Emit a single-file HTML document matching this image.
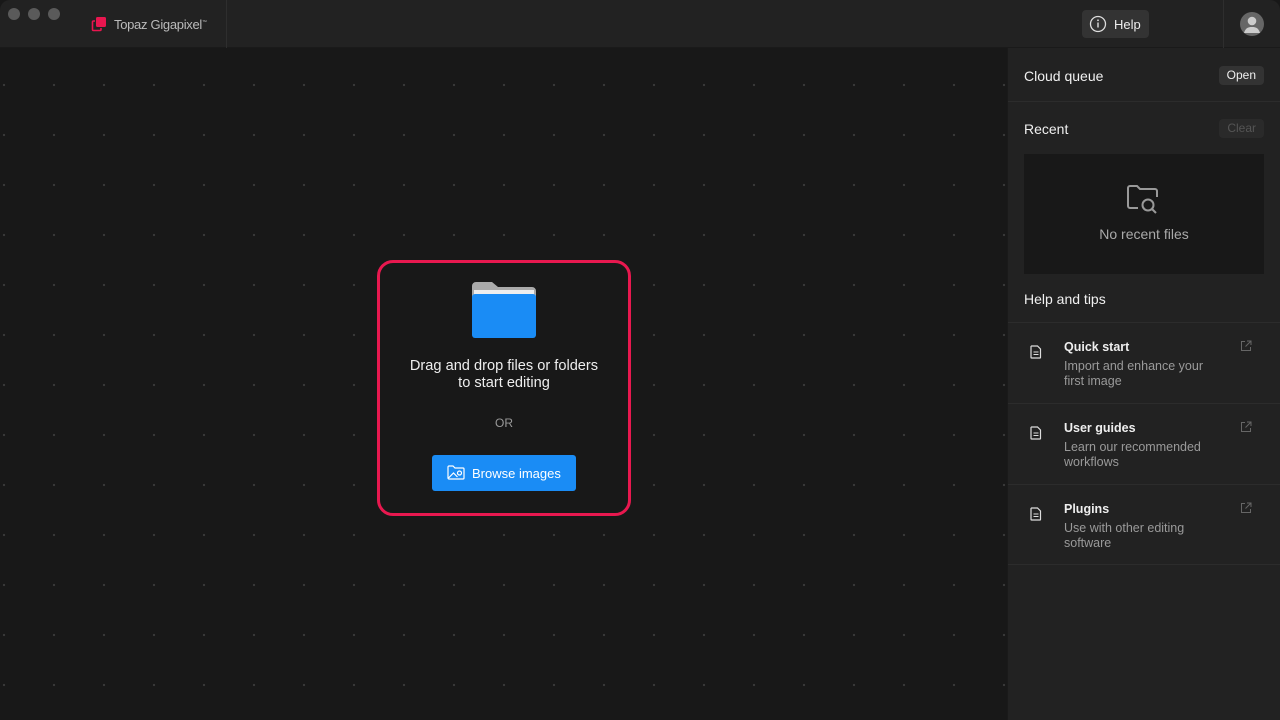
<!DOCTYPE html>
<html><head><style>
*{margin:0;padding:0;box-sizing:border-box}
body{width:1280px;height:720px;background:#181818;font-family:"Liberation Sans",sans-serif;overflow:hidden;position:relative;color:#eee}
.top{position:absolute;left:0;top:0;width:1280px;height:48px;background:#222;border-bottom:1px solid #1a1a1a;border-radius:10px 10px 0 0}
.tl{position:absolute;top:8px;width:12px;height:12px;border-radius:50%;background:#5a5a5a}
.main{position:absolute;left:0;top:48px;width:1008px;height:672px;background-color:#181818;background-image:radial-gradient(circle,#3a3a3a 1px,transparent 1.3px);background-size:50px 50px;background-position:-21px -38px}
.side{position:absolute;left:1008px;top:48px;width:272px;height:672px;background:#222;box-shadow:-1px 0 0 #1a1a1a}
.h{position:absolute;left:16px;font-size:14px;color:#f0f0f0}
.btn{position:absolute;right:16px;height:19px;border-radius:4px;font-size:12px;padding:2px 8px;background:#333}
.item{position:absolute;left:0;width:272px;height:81px;border-top:1px solid #2c2c2c}
.item b{position:absolute;left:56px;top:17px;font-size:12.5px;font-weight:bold;color:#eee}
.item p{position:absolute;left:56px;top:36px;font-size:12.5px;color:#9a9a9a;line-height:15px;width:160px}
.item svg{position:absolute}
</style></head><body>
<div class="top">
<div class="tl" style="left:8px"></div><div class="tl" style="left:28px"></div><div class="tl" style="left:48px"></div>
<svg style="position:absolute;left:91px;top:16px" width="16" height="16" viewBox="0 0 16 16"><rect x="5" y="1" width="10" height="10" rx="1.5" fill="#e8164f"/><path d="M4 5H2.5A1 1 0 0 0 1.5 6v7.5a1 1 0 0 0 1 1H9a1 1 0 0 0 1-1V12" fill="none" stroke="#e8164f" stroke-width="1.6"/></svg>
<div style="position:absolute;left:114px;top:17px;font-size:13px;color:#bbb;letter-spacing:-0.3px">Topaz Gigapixel<sup style="font-size:5px">™</sup></div>
<div style="position:absolute;left:226px;top:0;width:1px;height:48px;background:#2e2e2e"></div>
<div style="position:absolute;left:1082px;top:10px;width:67px;height:28px;background:#333;border-radius:4px"></div>
<svg style="position:absolute;left:1089px;top:15px" width="18" height="18" viewBox="0 0 18 18"><circle cx="9" cy="9" r="7.5" fill="none" stroke="#ddd" stroke-width="1.3"/><rect x="8.3" y="7.5" width="1.4" height="5" fill="#ddd"/><circle cx="9" cy="5.3" r="0.9" fill="#ddd"/></svg>
<div style="position:absolute;left:1114px;top:17px;font-size:13px;color:#eee">Help</div>
<div style="position:absolute;left:1223px;top:0;width:1px;height:48px;background:#2e2e2e"></div>
<svg style="position:absolute;left:1240px;top:12px" width="24" height="24" viewBox="0 0 24 24"><circle cx="12" cy="12" r="12" fill="#666"/><circle cx="12" cy="9" r="4.3" fill="#ccc"/><path d="M4 21c1.5-5 4-6 8-6s6.5 1 8 6z" fill="#ccc"/></svg>
</div>
<div class="main">
<div style="position:absolute;left:377px;top:212px;width:254px;height:256px;border:3px solid #e8184f;border-radius:16px;background:#181818"></div>
<svg style="position:absolute;left:472px;top:233px" width="64" height="57" viewBox="0 0 64 57"><path d="M0 5a4 4 0 0 1 4-4h16l6 5h34a4 4 0 0 1 4 4v10H0z" fill="#aaa"/><rect x="2" y="9" width="60" height="8" fill="#eee"/><rect x="0" y="13" width="64" height="44" rx="3" fill="#1a8cf5"/></svg>
<div style="position:absolute;left:377px;top:310px;width:254px;text-align:center;font-size:14.6px;line-height:17px;color:#eee">Drag and drop files or folders<br>to start editing</div>
<div style="position:absolute;left:377px;top:368px;width:254px;text-align:center;font-size:12px;color:#999">OR</div>
<div style="position:absolute;left:432px;top:407px;width:144px;height:36px;background:#1a8cf5;border-radius:3px"></div>
<svg style="position:absolute;left:447px;top:417px" width="18" height="15" viewBox="0 0 18 15"><path d="M1 2a1 1 0 0 1 1-1h4l2 2h8a1 1 0 0 1 1 1v9a1 1 0 0 1-1 1H2a1 1 0 0 1-1-1z" fill="none" stroke="#fff" stroke-width="1.2"/><path d="M1.5 13l5-5 4 4" fill="none" stroke="#fff" stroke-width="1.2"/><circle cx="12.5" cy="8" r="2" fill="none" stroke="#fff" stroke-width="1.2"/></svg>
<div style="position:absolute;left:472px;top:418px;font-size:13px;color:#fff">Browse images</div>
</div>
<div class="side">
<div class="h" style="top:20px">Cloud queue</div>
<div class="btn" style="top:18px;color:#eee">Open</div>
<div style="position:absolute;left:0;top:53px;width:272px;height:1px;background:#2c2c2c"></div>
<div class="h" style="top:73px">Recent</div>
<div class="btn" style="top:71px;color:#555;background:#2a2a2a">Clear</div>
<div style="position:absolute;left:16px;top:106px;width:240px;height:120px;background:#181818"></div>
<svg style="position:absolute;left:118px;top:136px" width="36" height="32" viewBox="0 0 36 32"><path d="M12 24H4a2 2 0 0 1-2-2V4a2 2 0 0 1 2-2h7l3 3h15a2 2 0 0 1 2 2v6" fill="none" stroke="#999" stroke-width="2"/><circle cx="22" cy="21" r="5.5" fill="none" stroke="#999" stroke-width="2"/><path d="M26 25l4 4" stroke="#999" stroke-width="2"/></svg>
<div style="position:absolute;left:16px;top:178px;width:240px;text-align:center;font-size:14px;color:#aaa">No recent files</div>
<div class="h" style="top:243px">Help and tips</div>
<div class="item" style="top:274px"><svg style="left:22px;top:22px" width="12" height="14" viewBox="0 0 12 14"><path d="M1.5 1h6l3 3v8.5a.5.5 0 0 1-.5.5h-8.5a.5.5 0 0 1-.5-.5v-11z" fill="none" stroke="#ddd" stroke-width="1.2"/><path d="M3.5 7h5M3.5 9.5h5" stroke="#ddd" stroke-width="1.1"/></svg><b>Quick start</b><p>Import and enhance your first image</p><svg style="left:232px;top:17px" width="12" height="12" viewBox="0 0 12 12"><path d="M5 1.5H1.5v9h9V7M7 1h4v4M11 1L5.5 6.5" fill="none" stroke="#666" stroke-width="1"/></svg></div>
<div class="item" style="top:355px"><svg style="left:22px;top:22px" width="12" height="14" viewBox="0 0 12 14"><path d="M1.5 1h6l3 3v8.5a.5.5 0 0 1-.5.5h-8.5a.5.5 0 0 1-.5-.5v-11z" fill="none" stroke="#ddd" stroke-width="1.2"/><path d="M3.5 7h5M3.5 9.5h5" stroke="#ddd" stroke-width="1.1"/></svg><b>User guides</b><p>Learn our recommended workflows</p><svg style="left:232px;top:17px" width="12" height="12" viewBox="0 0 12 12"><path d="M5 1.5H1.5v9h9V7M7 1h4v4M11 1L5.5 6.5" fill="none" stroke="#666" stroke-width="1"/></svg></div>
<div class="item" style="top:436px;border-bottom:1px solid #2c2c2c"><svg style="left:22px;top:22px" width="12" height="14" viewBox="0 0 12 14"><path d="M1.5 1h6l3 3v8.5a.5.5 0 0 1-.5.5h-8.5a.5.5 0 0 1-.5-.5v-11z" fill="none" stroke="#ddd" stroke-width="1.2"/><path d="M3.5 7h5M3.5 9.5h5" stroke="#ddd" stroke-width="1.1"/></svg><b>Plugins</b><p>Use with other editing software</p><svg style="left:232px;top:17px" width="12" height="12" viewBox="0 0 12 12"><path d="M5 1.5H1.5v9h9V7M7 1h4v4M11 1L5.5 6.5" fill="none" stroke="#666" stroke-width="1"/></svg></div>
</div>
</body></html>
